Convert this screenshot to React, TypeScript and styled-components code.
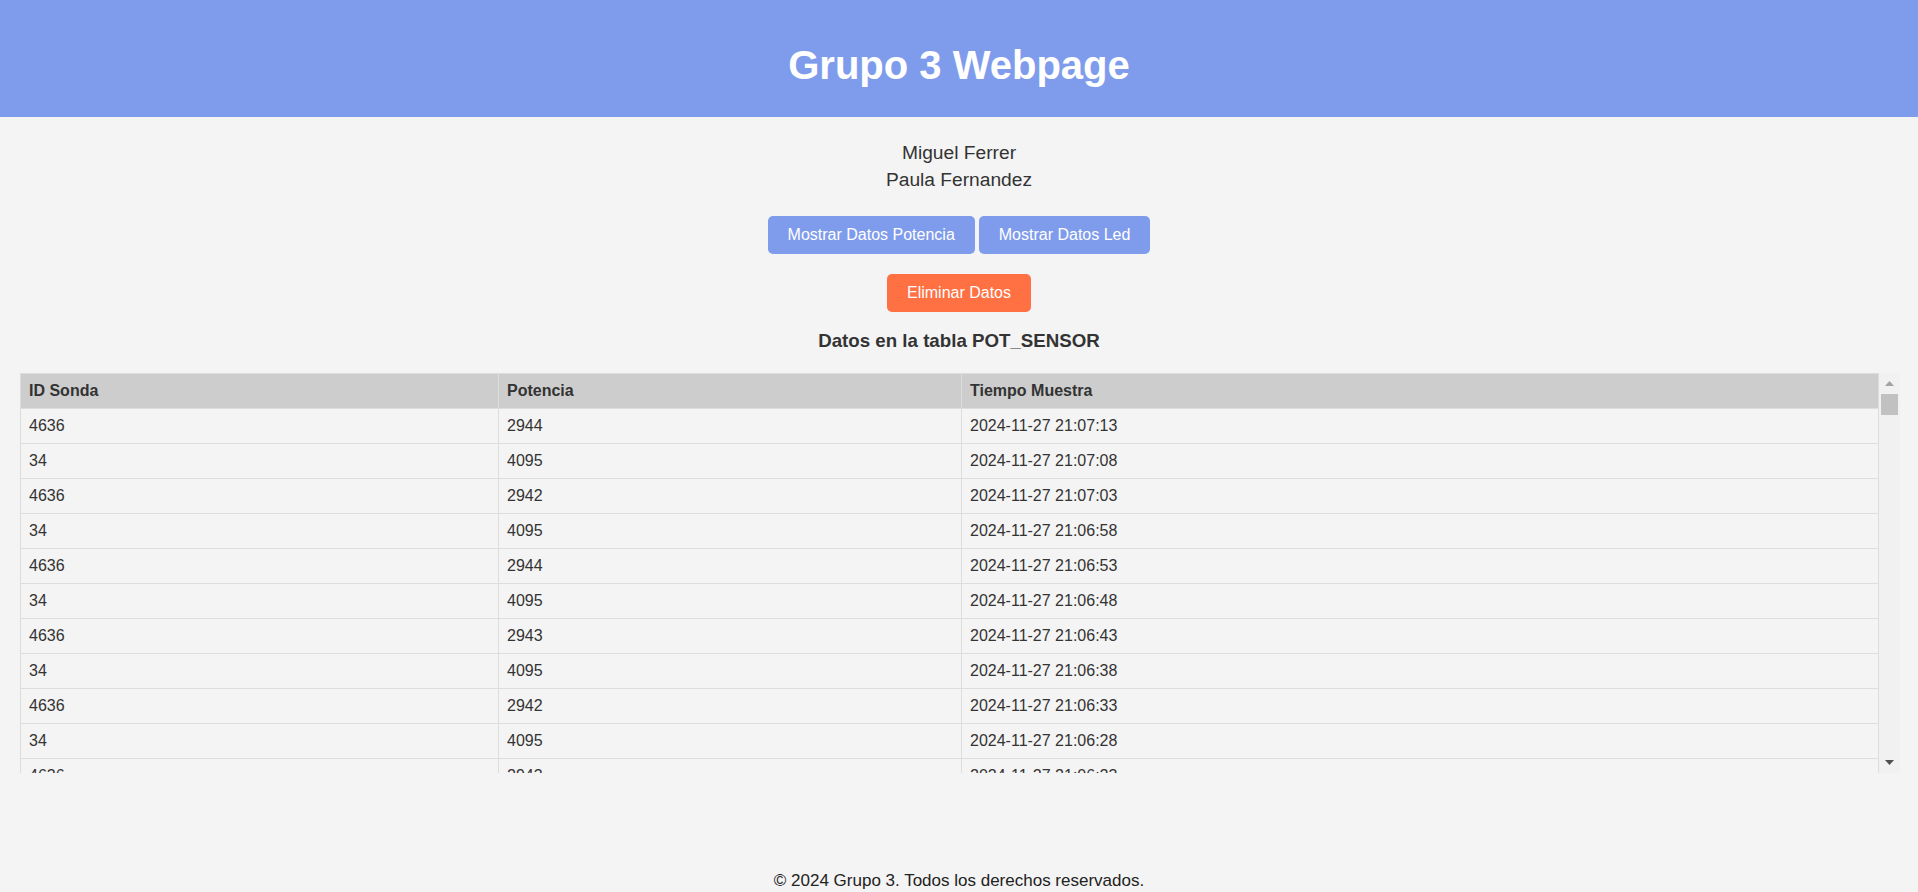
import React, { useLayoutEffect, useRef, useState } from 'react';
import styled, { createGlobalStyle } from 'styled-components';

const GlobalStyle = createGlobalStyle`
  * {
    box-sizing: border-box;
  }

  html, body {
    margin: 0;
    padding: 0;
    height: 100%;
    overflow: hidden;
  }

  body {
    background-color: #f4f4f4;
    font-family: "Liberation Sans", Arial, sans-serif;
    color: #333;
  }
`;

const HeaderStyled = styled.header`
  background-color: #7f9cec;
  height: 117px;
  padding-top: 42px;
  text-align: center;
`;

const TitleStyled = styled.h1`
  margin: 0;
  font-size: 40px;
  line-height: 46px;
  font-weight: 700;
  color: #fff;
`;

const MainStyled = styled.main`
  display: flex;
  flex-direction: column;
  align-items: center;
`;

const NamesStyled = styled.div`
  margin-top: 22px;
  text-align: center;
`;

const NameStyled = styled.p`
  margin: 0;
  font-size: 19.2px;
  line-height: 27px;
  color: #333;
`;

const ButtonRowStyled = styled.div<{ $top: number }>`
  display: flex;
  gap: 4px;
  margin-top: ${p => p.$top}px;
`;

const ButtonStyled = styled.button<{ $danger?: boolean }>`
  font-family: inherit;
  font-size: 16px;
  line-height: 18px;
  padding: 10px 20px;
  border: none;
  border-radius: 5px;
  color: #fff;
  background-color: ${p => (p.$danger ? '#ff7043' : '#7f9cec')};
  cursor: pointer;
`;

const SectionTitleStyled = styled.h3`
  margin: 18px 0 0;
  font-size: 18.72px;
  line-height: 22px;
  font-weight: 700;
  color: #333;
`;

const ScrollFrameStyled = styled.div`
  align-self: stretch;
  margin: 21px 18px 0 20px;
  height: 400px;
  display: flex;
`;

const TableScrollStyled = styled.div`
  flex: 1;
  min-width: 0;
  overflow-y: auto;
  scrollbar-width: none;

  &::-webkit-scrollbar {
    display: none;
  }
`;

const ScrollbarStyled = styled.div`
  width: 21px;
  flex-shrink: 0;
  display: flex;
  flex-direction: column;
  background-color: #f1f1f1;
`;

const ScrollArrowStyled = styled.button<{ $dim?: boolean }>`
  height: 21px;
  flex-shrink: 0;
  padding: 0;
  border: none;
  background: transparent;
  display: flex;
  align-items: center;
  justify-content: center;
  color: ${p => (p.$dim ? '#a3a3a3' : '#505050')};
  cursor: default;
`;

const ScrollTrackStyled = styled.div`
  flex: 1;
  padding: 0 2px;
  overflow: hidden;
`;

const ScrollThumbStyled = styled.div`
  background-color: #c1c1c1;
`;

const TableStyled = styled.table`
  width: 100%;
  border-collapse: collapse;
  table-layout: fixed;
  font-size: 16px;
  line-height: 18px;
  color: #333;
`;

const ThStyled = styled.th<{ $width?: number }>`
  ${p => (p.$width ? `width: ${p.$width}px;` : '')}
  background-color: #cdcdcd;
  border: 1px solid #dddddd;
  padding: 8px;
  text-align: left;
  font-weight: 700;
`;

const TdStyled = styled.td`
  border: 1px solid #dddddd;
  padding: 8px;
  text-align: left;
  white-space: nowrap;
  overflow: hidden;
`;

const FooterStyled = styled.footer`
  margin-top: 98px;
  text-align: center;
  font-size: 17px;
  line-height: 20px;
  color: #222;
`;

type Row = { id: string; pot: string; time: string };

const firstRows: Row[] = [
  { id: '4636', pot: '2944', time: '21:07:13' },
  { id: '34', pot: '4095', time: '21:07:08' },
  { id: '4636', pot: '2942', time: '21:07:03' },
  { id: '34', pot: '4095', time: '21:06:58' },
  { id: '4636', pot: '2944', time: '21:06:53' },
  { id: '34', pot: '4095', time: '21:06:48' },
  { id: '4636', pot: '2943', time: '21:06:43' },
  { id: '34', pot: '4095', time: '21:06:38' },
  { id: '4636', pot: '2942', time: '21:06:33' },
  { id: '34', pot: '4095', time: '21:06:28' },
  { id: '4636', pot: '2943', time: '21:06:23' },
];

const pad = (n: number) => String(n).padStart(2, '0');

const buildRows = (count: number): Row[] => {
  const rows = [...firstRows];
  const start = 21 * 3600 + 7 * 60 + 13;
  const pots = ['2944', '2942', '2943'];
  for (let i = rows.length; i < count; i++) {
    const s = start - i * 5;
    const time = `${pad(Math.floor(s / 3600))}:${pad(Math.floor((s % 3600) / 60))}:${pad(s % 60)}`;
    const isProbe = i % 2 === 0;
    rows.push({
      id: isProbe ? '4636' : '34',
      pot: isProbe ? pots[(i / 2) % 3] : '4095',
      time,
    });
  }
  return rows;
};

const rows = buildRows(194);

const Arrow = ({ up }: { up?: boolean }) => (
  <svg width="9" height="5" viewBox="0 0 9 5">
    <polygon points={up ? '0,5 4.5,0 9,5' : '0,0 9,0 4.5,5'} fill="currentColor" />
  </svg>
);

const DataTable = () => {
  const scrollRef = useRef<HTMLDivElement>(null);
  const trackRef = useRef<HTMLDivElement>(null);
  const [thumb, setThumb] = useState({ height: 21, top: 0, atTop: true });

  const update = () => {
    const el = scrollRef.current;
    const track = trackRef.current;
    if (!el || !track) return;
    const trackH = track.clientHeight;
    const height = Math.max(17, (trackH * el.clientHeight) / el.scrollHeight);
    const max = el.scrollHeight - el.clientHeight;
    const top = max > 0 ? ((trackH - height) * el.scrollTop) / max : 0;
    setThumb({ height, top, atTop: el.scrollTop <= 0 });
  };

  useLayoutEffect(update, []);

  const step = (dy: number) => {
    scrollRef.current?.scrollBy({ top: dy });
  };

  return <ScrollFrameStyled>
    <TableScrollStyled ref={scrollRef} onScroll={update}>
      <TableStyled>
        <thead>
          <tr>
            <ThStyled $width={478}>ID Sonda</ThStyled>
            <ThStyled $width={463}>Potencia</ThStyled>
            <ThStyled>Tiempo Muestra</ThStyled>
          </tr>
        </thead>
        <tbody>
          {rows.map((r, i) => (
            <tr key={i}>
              <TdStyled>{r.id}</TdStyled>
              <TdStyled>{r.pot}</TdStyled>
              <TdStyled>2024-11-27 {r.time}</TdStyled>
            </tr>
          ))}
        </tbody>
      </TableStyled>
    </TableScrollStyled>
    <ScrollbarStyled>
      <ScrollArrowStyled $dim={thumb.atTop} onClick={() => step(-40)}>
        <Arrow up />
      </ScrollArrowStyled>
      <ScrollTrackStyled ref={trackRef}>
        <ScrollThumbStyled style={{ height: thumb.height, marginTop: thumb.top }} />
      </ScrollTrackStyled>
      <ScrollArrowStyled onClick={() => step(40)}>
        <Arrow />
      </ScrollArrowStyled>
    </ScrollbarStyled>
  </ScrollFrameStyled>;
};

const App = () => {
  return <>
    <GlobalStyle />
    <HeaderStyled>
      <TitleStyled>Grupo 3 Webpage</TitleStyled>
    </HeaderStyled>
    <MainStyled>
      <NamesStyled>
        <NameStyled>Miguel Ferrer</NameStyled>
        <NameStyled>Paula Fernandez</NameStyled>
      </NamesStyled>

      <ButtonRowStyled $top={23}>
        <ButtonStyled>Mostrar Datos Potencia</ButtonStyled>
        <ButtonStyled>Mostrar Datos Led</ButtonStyled>
      </ButtonRowStyled>
      <ButtonRowStyled $top={20}>
        <ButtonStyled $danger>Eliminar Datos</ButtonStyled>
      </ButtonRowStyled>

      <SectionTitleStyled>Datos en la tabla POT_SENSOR</SectionTitleStyled>

      <DataTable />
    </MainStyled>
    <FooterStyled>© 2024 Grupo 3. Todos los derechos reservados.</FooterStyled>
  </>;
};

export default App;
